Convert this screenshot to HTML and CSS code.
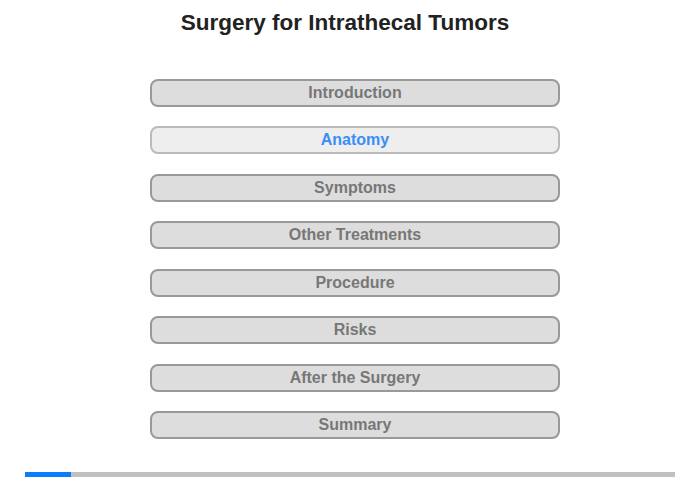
FILE: index.html
```html
<!DOCTYPE html>
<html>
<head>
<meta charset="utf-8">
<link rel="stylesheet" href="styles.css">
</head>
<body>
<div class="page">
  <h1 class="title">Surgery for Intrathecal Tumors</h1>
  <nav class="menu">
    <div class="btn">Introduction</div>
    <div class="btn active">Anatomy</div>
    <div class="btn">Symptoms</div>
    <div class="btn">Other Treatments</div>
    <div class="btn">Procedure</div>
    <div class="btn">Risks</div>
    <div class="btn">After the Surgery</div>
    <div class="btn">Summary</div>
  </nav>
  <div class="progress"><div class="progress-fill" style="width:46px"></div></div>
</div>
</body>
</html>
```

FILE: styles.css
```css
html, body {
  margin: 0;
  padding: 0;
  background: #fff;
}
.page {
  width: 700px;
  height: 480px;
  display: flex;
  flex-direction: column;
  font-family: "Liberation Sans", Arial, sans-serif;
}
.title {
  margin: 10px 0 0 0;
  padding-right: 10px;
  height: 26px;
  line-height: 26px;
  font-size: 22.5px;
  font-weight: bold;
  color: #222;
  text-align: center;
}
.menu {
  margin: 43px 0 0 150px;
  width: 410px;
  display: flex;
  flex-direction: column;
  gap: 19.43px;
}
.btn {
  box-sizing: border-box;
  height: 28px;
  border: 2px solid #999;
  border-radius: 8px;
  background: #ddd;
  color: #777;
  font-size: 16px;
  font-weight: bold;
  text-align: center;
  line-height: 24px;
}
.btn.active {
  background: #eee;
  border-color: #bbb;
  color: #3a8ff7;
}
.progress {
  margin: 33px 0 0 25px;
  width: 650px;
  height: 5px;
  background: #c0c0c0;
}
.progress-fill {
  height: 100%;
  background: #0a7cff;
}
```
